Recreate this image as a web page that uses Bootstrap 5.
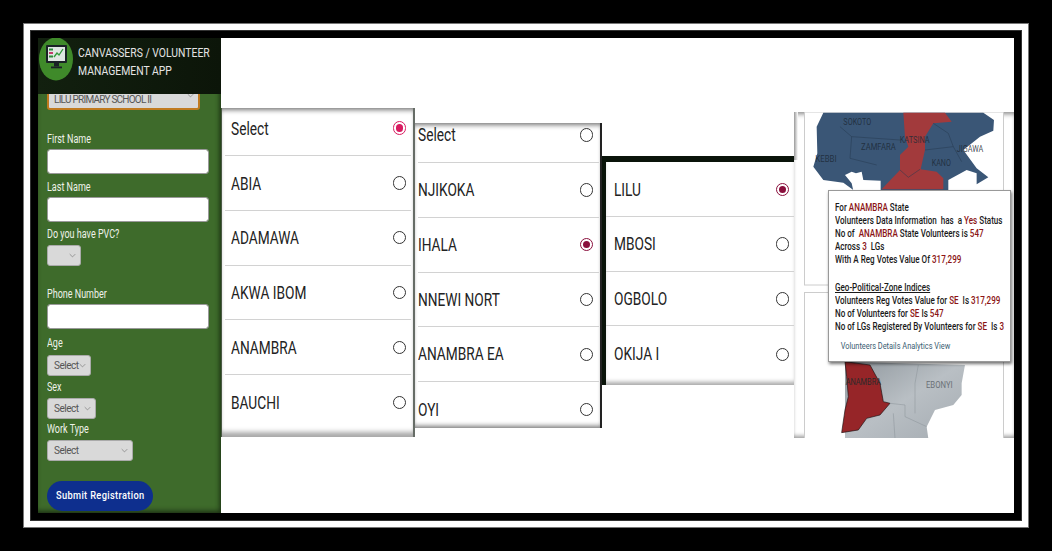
<!DOCTYPE html>
<html lang="en">
<head>
  <meta charset="UTF-8">
  <meta name="viewport" content="width=device-width, initial-scale=1.0">
  <title>Canvassers / Volunteer Management App</title>
  <link href="https://cdn.jsdelivr.net/npm/bootstrap@5.3.0/dist/css/bootstrap.min.css" rel="stylesheet">
  <style>
    html, body { height: 100%; background: #000; overflow: hidden; }
    body { font-family: Roboto, "Liberation Sans", sans-serif; }
    .shot-frame { width: 1006px; height: 505px; margin: 23px 0 0 23px; padding: 6px; background: #fff; border: 1px solid #777; }
    .shot-inner { height: 100%; padding: 7px; background: #000; border: 1px solid #333; }
    .app-wrap { height: 475px; background: #fff; }

    .side-bar { width: 183px; flex: none; background: #3e6b2b; box-shadow: inset 0 -4px 5px -2px #1c2f14, inset -4px 0 4px -2px #24401a; }
    .side-head { height: 56px; background: linear-gradient(90deg, #12200f, #0c1509); position: relative; z-index: 2; color: #e4e4e4; }
    .head-logo { width: 34px; height: 43px; margin: 0 5px 0 1px; flex: none; }
    .head-title { font-size: 13.5px; line-height: 18px; white-space: nowrap; padding-top: 5px; }
    .squeeze { display: inline-block; transform: scaleX(.74); transform-origin: 0 50%; white-space: nowrap; }
    .head-title .squeeze { transform: scaleX(.77); }
    .side-form { padding: 0 12px 0 9px; height: 419px; overflow: hidden; }
    .side-form label { display: block; color: #eef2ea; font-size: 12.5px; line-height: 15px; margin: 0; }
    .side-form label .squeeze { transform: scaleX(.72); }
    .side-form .form-control { height: 25px; padding: 0 6px; border-radius: 3px; border: 1px solid #999; margin-top: 3px; margin-bottom: 4.5px; }
    .side-form .form-select { height: 21px; padding: 0 2px 0 6px; font-size: 10px; letter-spacing: -.5px; line-height: 19px; color: #555; background-color: #d9d9d9; border: 1px solid #aaa; border-radius: 3px; background-image: url("data:image/svg+xml,%3csvg xmlns='http://www.w3.org/2000/svg' viewBox='0 0 10 6'%3e%3cpath fill='none' stroke='%23666' stroke-width='.8' d='M1 1l4 4 4-4'/%3e%3c/svg%3e"); background-position: right 4px center; background-size: 7px 5px; margin-top: 4px; margin-bottom: 4px; }
    .side-form .sel-school { width: 153px; height: 30px; margin: -14px 0 21px; border: 2px solid #c07a20; padding-top: 8px; padding-left: 5px; letter-spacing: -.75px; }
    .side-form .sel-pvc { width: 34px; margin-bottom: 20px; }
    .side-form .phone-input { margin-bottom: 6px; }
    .side-form .sel-age { width: 44px; margin-top: 5px; margin-bottom: 3px; }
    .side-form .sel-sex { width: 49px; margin-bottom: 2px; }
    .side-form .sel-work { width: 86px; margin-bottom: 20px; }
    .btn-submit { width: 106px; height: 30px; padding: 0; border: 0; border-radius: 15px; background: #0e2f8e; color: #fff; font-family: Roboto, sans-serif; font-size: 10.5px; font-weight: 500; letter-spacing: .4px; white-space: nowrap; }
    .btn-label { display: inline-block; transform: scaleX(.88); }

    .pick-panel { background: #fff; flex: none; }
    .pick-panel .list-group-item { height: 54.8px; border-color: #d2d2d2; background: transparent; color: #222; font-size: 18.5px; }
    .panel-states { width: 194px; height: 329px; margin-top: 70px; padding: 0 2px 8px 3px; border-right: 2px solid #666c66; border-left: 1px solid #4a5a44; box-shadow: inset 0 5px 5px -3px #777, inset 0 -8px 5px -3px #aaa; }
    .panel-states .list-group-item { padding: 3px 5px 0 6px; }
    .panel-states .list-group-item:first-child { height: 48px; padding-top: 0; padding-bottom: 4px; }
    .panel-states .radio-mark { margin-top: -3px; }
    .panel-lgas { width: 187px; height: 305px; margin-top: 85px; padding: 0 1px 0 3px; border-right: 2px solid #222; box-shadow: inset 0 5px 5px -3px #777, inset 0 -5px 5px -3px #777; }
    .panel-lgas .list-group-item { padding: 2px 6px 0 0; }
    .panel-lgas .list-group-item:first-child { height: 40px; padding-top: 0; padding-bottom: 13px; }
    .panel-towns { width: 192px; height: 229px; margin-top: 118px; border-top: 6px solid #0a140a; border-left: 4px solid #0a140a; padding-bottom: 4px; box-shadow: inset 0 -5px 4px -2px #aaa; }
    .panel-towns .list-group-item { padding: 3px 5px 0 8px; }
    .radio-mark { width: 13.5px; height: 13.5px; border: 1.5px solid #333; border-radius: 50%; flex: none; margin-top: -2px; position: relative; }
    .radio-mark.is-on { border-color: #8a0f3c; }
    .radio-mark.is-on::after { content: ""; position: absolute; inset: 2px; border-radius: 50%; background: #8a0f3c; }
    .panel-states .radio-mark.is-on { border-color: #d81b60; }
    .panel-states .radio-mark.is-on::after { background: #d81b60; }

    .map-panel { width: 220px; height: 326px; margin-top: 74px; flex: none; position: relative; box-shadow: inset 0 5px 5px -3px #888, inset 0 -4px 4px -2px #999; }
    .map-panel::before { content: ""; position: absolute; left: 0; top: 0; width: 4px; height: 48px; background: linear-gradient(90deg, #999, #fff); }
    .map-art { display: block; width: 220px; height: 326px; }
    .info-pop { position: absolute; left: 34px; top: 78px; width: 183px; height: 172px; padding: 10px 0 0 6px; background: #fff; border: 1px solid #999; box-shadow: 1px 2px 3px rgba(0,0,0,.55); font-size: 10px; font-weight: 500; line-height: 13px; color: #1a1a1a; white-space: nowrap; }
    .pop-text { width: 210px; transform: scaleX(.806); transform-origin: 0 0; }
    .info-pop b { font-weight: 500; color: #8b1414; }
    .pop-gap { height: 15px; }
    .pop-title { text-decoration: underline; }
    .pop-link { display: block; margin: 6px 0 0 7px; color: #3b5d72; font-size: 9.2px; font-weight: 400; text-decoration: none; }
  </style>
</head>
<body>
  <div class="shot-frame">
    <div class="shot-inner">
      <div class="app-wrap d-flex">

        <!-- left form -->
        <div class="side-bar">
          <div class="side-head d-flex align-items-start">
            <svg class="head-logo" viewBox="0 0 34 43">
              <ellipse cx="17" cy="21" rx="17" ry="21.500" fill="#3f8a2a"/>
              <rect x="7" y="7" width="21" height="18" rx="1" fill="#1a2226"/>
              <rect x="9" y="9" width="17" height="14" fill="#dfe6e2"/>
              <rect x="10" y="10.500" width="4" height="2" fill="#2c8a3a"/>
              <rect x="10" y="14" width="4" height="2" fill="#c23a6a"/>
              <rect x="10" y="17.500" width="4" height="2" fill="#2c8a3a"/>
              <path d="M15 19 l3 -4 2 2 4 -6" fill="none" stroke="#2f9a3a" stroke-width="1.300"/>
              <rect x="15" y="25" width="5" height="3.500" fill="#1a2226"/>
              <rect x="12" y="28.500" width="11" height="1.800" fill="#1a2226"/>
            </svg>
            <div class="head-title"><span class="squeeze">CANVASSERS / VOLUNTEER</span><br><span class="squeeze">MANAGEMENT APP</span></div>
          </div>
          <form class="side-form">
            <select class="form-select sel-school"><option>LILU PRIMARY SCHOOL II</option></select>
            <label><span class="squeeze">First Name</span></label>
            <input type="text" class="form-control">
            <label><span class="squeeze">Last Name</span></label>
            <input type="text" class="form-control">
            <label><span class="squeeze">Do you have PVC?</span></label>
            <select class="form-select sel-pvc"><option></option></select>
            <label><span class="squeeze">Phone Number</span></label>
            <input type="text" class="form-control phone-input">
            <label><span class="squeeze">Age</span></label>
            <select class="form-select sel-age"><option>Select</option></select>
            <label><span class="squeeze">Sex</span></label>
            <select class="form-select sel-sex"><option>Select</option></select>
            <label><span class="squeeze">Work Type</span></label>
            <select class="form-select sel-work"><option>Select</option></select>
            <button type="button" class="btn-submit"><span class="btn-label">Submit Registration</span></button>
          </form>
        </div>

        <!-- state list -->
        <div class="pick-panel panel-states">
          <div class="list-group list-group-flush">
            <div class="list-group-item d-flex justify-content-between align-items-center"><span class="squeeze">Select</span><span class="radio-mark is-on"></span></div>
            <div class="list-group-item d-flex justify-content-between align-items-center"><span class="squeeze">ABIA</span><span class="radio-mark"></span></div>
            <div class="list-group-item d-flex justify-content-between align-items-center"><span class="squeeze">ADAMAWA</span><span class="radio-mark"></span></div>
            <div class="list-group-item d-flex justify-content-between align-items-center"><span class="squeeze">AKWA IBOM</span><span class="radio-mark"></span></div>
            <div class="list-group-item d-flex justify-content-between align-items-center"><span class="squeeze">ANAMBRA</span><span class="radio-mark"></span></div>
            <div class="list-group-item d-flex justify-content-between align-items-center"><span class="squeeze">BAUCHI</span><span class="radio-mark"></span></div>
          </div>
        </div>

        <!-- local government list -->
        <div class="pick-panel panel-lgas">
          <div class="list-group list-group-flush">
            <div class="list-group-item d-flex justify-content-between align-items-center"><span class="squeeze">Select</span><span class="radio-mark"></span></div>
            <div class="list-group-item d-flex justify-content-between align-items-center"><span class="squeeze">NJIKOKA</span><span class="radio-mark"></span></div>
            <div class="list-group-item d-flex justify-content-between align-items-center"><span class="squeeze">IHALA</span><span class="radio-mark is-on"></span></div>
            <div class="list-group-item d-flex justify-content-between align-items-center"><span class="squeeze">NNEWI NORT</span><span class="radio-mark"></span></div>
            <div class="list-group-item d-flex justify-content-between align-items-center"><span class="squeeze">ANAMBRA EA</span><span class="radio-mark"></span></div>
            <div class="list-group-item d-flex justify-content-between align-items-center"><span class="squeeze">OYI</span><span class="radio-mark"></span></div>
          </div>
        </div>

        <!-- ward list -->
        <div class="pick-panel panel-towns">
          <div class="list-group list-group-flush">
            <div class="list-group-item d-flex justify-content-between align-items-center"><span class="squeeze">LILU</span><span class="radio-mark is-on"></span></div>
            <div class="list-group-item d-flex justify-content-between align-items-center"><span class="squeeze">MBOSI</span><span class="radio-mark"></span></div>
            <div class="list-group-item d-flex justify-content-between align-items-center"><span class="squeeze">OGBOLO</span><span class="radio-mark"></span></div>
            <div class="list-group-item d-flex justify-content-between align-items-center"><span class="squeeze">OKIJA I</span><span class="radio-mark"></span></div>
          </div>
        </div>

        <!-- map and popup -->
        <div class="map-panel">
          <svg class="map-art" viewBox="794 112 220 326">
            <defs>
              <linearGradient id="greyLand" x1="0" y1="0" x2="1" y2="1">
                <stop offset="0" stop-color="#8f979d"/>
                <stop offset=".5" stop-color="#b9bfc4"/>
                <stop offset="1" stop-color="#a4abb1"/>
              </linearGradient>
            </defs>
            <rect x="804.500" y="112" width="199" height="173" fill="#fff" stroke="#ccc"/>
            <rect x="804.500" y="292.500" width="199" height="146" fill="#fff" stroke="#ccc"/>
            <g transform="translate(780 90) scale(.3333)">
              <path d="M130 68 L110 110 L112 190 L100 230 L130 270 L190 278 L220 300 L505 300 L505 270 L560 240 L590 250 L590 283 L625 262 L590 235 L550 180 L600 140 L640 122 L642 90 L610 68 Z" fill="#3a5676"/>
              <path d="M195 255 L215 245 L228 250 L245 245 L250 270 L302 272 L302 302 L220 302 L215 280 Z" fill="#fff"/>
              <path d="M370 68 L375 140 L385 170 L360 195 L360 240 L305 298 L490 298 L490 265 L470 245 L422 238 L435 180 L435 140 L460 100 L515 95 L495 68 Z" fill="#a23a3c"/>
              <path d="M180 110 L215 140 L210 205 L290 225 M215 140 L360 150 M460 100 L505 130 L520 170 L545 215 M435 180 L520 170 M360 240 L385 262 L420 238" fill="none" stroke="#24384e" stroke-width="1.500"/>
              <g font-family="Roboto, sans-serif" font-size="25" fill="#1d2a36" text-anchor="middle" fill-opacity=".85">
                <text x="232" y="104" textLength="84" lengthAdjust="spacingAndGlyphs">SOKOTO</text>
                <text x="295" y="181" textLength="104" lengthAdjust="spacingAndGlyphs">ZAMFARA</text>
                <text x="404" y="158" textLength="90" lengthAdjust="spacingAndGlyphs">KATSINA</text>
                <text x="484" y="229" textLength="58" lengthAdjust="spacingAndGlyphs">KANO</text>
                <text x="570" y="187" textLength="80" lengthAdjust="spacingAndGlyphs">JIGAWA</text>
                <text x="138" y="217" textLength="64" lengthAdjust="spacingAndGlyphs">KEBBI</text>
              </g>
            </g>
            <g transform="translate(780 270) scale(.3333)">
              <path d="M195 275 L555 285 L545 340 L545 375 L520 405 L465 420 L440 470 L445 505 L195 505 Z" fill="url(#greyLand)"/>
              <path d="M195 275 L270 285 L300 340 L310 395 L330 400 L300 435 L260 445 L235 480 L185 488 L195 420 L205 380 L200 320 Z" fill="#962528" stroke="#1c1214" stroke-width="2"/>
              <path d="M415 285 L405 340 L405 430 M330 400 L375 405 L375 440 L440 470 M340 430 L345 505" fill="none" stroke="#8a9197" stroke-width="1.500"/>
              <g font-family="Roboto, sans-serif" font-size="25" fill="#2a2a2a" text-anchor="middle">
                <text x="250" y="346" textLength="106" lengthAdjust="spacingAndGlyphs">ANAMBRA</text>
                <text x="478" y="353" textLength="80" lengthAdjust="spacingAndGlyphs" fill="#6a7076">EBONYI</text>
              </g>
            </g>
          </svg>
          <div class="info-pop">
            <div class="pop-text">
              <div>For <b>ANAMBRA</b> State</div>
              <div>Volunteers Data Information&nbsp; has&nbsp; a <b>Yes</b> Status</div>
              <div>No of&nbsp; <b>ANAMBRA</b> State Volunteers is <b>547</b></div>
              <div>Across <b>3</b>&nbsp; LGs</div>
              <div>With A Reg Votes Value Of <b>317,299</b></div>
              <div class="pop-gap"></div>
              <div class="pop-title">Geo-Political-Zone Indices</div>
              <div>Volunteers Reg Votes Value for <b>SE</b>&nbsp; Is <b>317,299</b></div>
              <div>No of Volunteers for <b>SE</b> Is <b>547</b></div>
              <div>No of LGs Registered By Volunteers for <b>SE</b>&nbsp; Is <b>3</b></div>
              <a class="pop-link" href="#">Volunteers Details Analytics View</a>
            </div>
          </div>
        </div>

      </div>
    </div>
  </div>
  <script src="https://cdn.jsdelivr.net/npm/bootstrap@5.3.0/dist/js/bootstrap.bundle.min.js"></script>
</body>
</html>
